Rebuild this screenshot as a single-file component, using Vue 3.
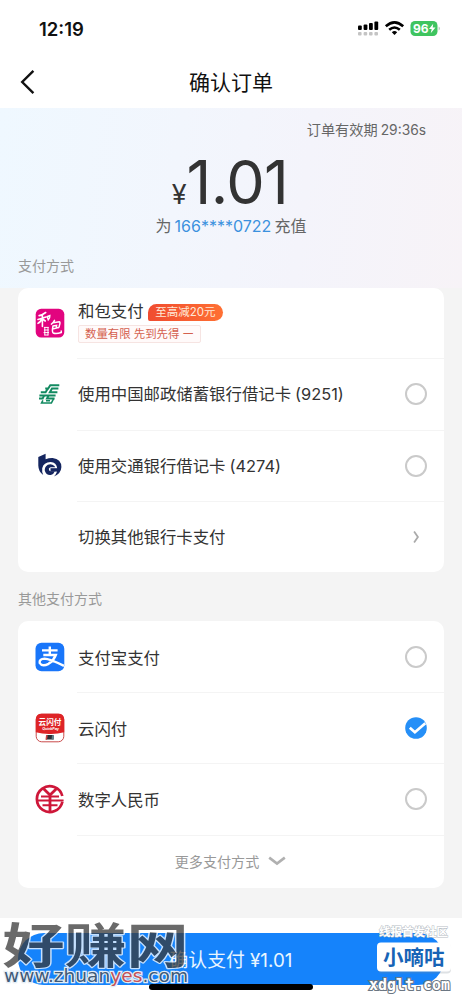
<script setup>
const cards = [
  { id: 'baofu', name: '和包支付', tag: '至高减20元', note: '数量有限 先到先得 ㇐', control: '' },
  { id: 'psbc', name: '使用中国邮政储蓄银行借记卡', num: '(9251)', control: 'radio' },
  { id: 'bocom', name: '使用交通银行借记卡', num: '(4274)', control: 'radio' },
  { id: 'switch', name: '切换其他银行卡支付', control: 'arrow' },
]
const others = [
  { id: 'alipay', name: '支付宝支付' },
  { id: 'union', name: '云闪付', checked: true },
  { id: 'ecny', name: '数字人民币' },
]
</script>

<template>
  <div class="page">
    <header class="status">
      <span class="time">12:19</span>
      <svg class="sys" width="84" height="18" viewBox="0 0 84 18">
        <g fill="#000">
          <rect x="1" y="5.5" width="3.8" height="4.5" rx="1" />
          <rect x="6.6" y="4.5" width="3.8" height="5.5" rx="1" />
          <rect x="12" y="3" width="3.8" height="7" rx="1" />
          <rect x="17.4" y="1.5" width="3.8" height="8.5" rx="1" />
        </g>
        <g fill="#c4c4c4">
          <rect x="1" y="12" width="3.6" height="3.4" rx="1" />
          <rect x="6.6" y="12" width="3.6" height="3.4" rx="1" />
          <rect x="12" y="12" width="3.6" height="3.4" rx="1" />
          <rect x="17.4" y="12" width="3.6" height="3.4" rx="1" />
        </g>
        <g fill="none" stroke="#000" stroke-width="2.6">
          <path d="M28.8 6.2 Q37.5 -1.6 46.2 6.2" />
          <path d="M32.2 9.8 Q37.5 5.2 42.8 9.8" />
        </g>
        <path d="M37.5 15 L34.8 12.2 Q37.5 10 40.2 12.2Z" fill="#000" />
        <rect x="53.5" y="1" width="27" height="15" rx="4.5" fill="#3fc45f" />
        <path d="M81.6 6.5 v4 q1.3-.4 1.3-2t-1.3-2" fill="#b6c8ba" />
        <text x="56" y="12.7" class="bat">96</text>
        <path d="M76.2 3.8 L72 9 h2.7 l-1 4.3 4.8-5.8 h-2.8z" fill="#fff" />
      </svg>
    </header>
    <nav class="nav">
      <svg class="back" width="16" height="26" viewBox="0 0 16 26">
        <path d="M13.4 1.8 L2.2 13 L13.4 24.2" fill="none" stroke="#111" stroke-width="2.4" />
      </svg>
      <h1>确认订单</h1>
    </nav>

    <section class="hero">
      <p class="valid">订单有效期<span class="clock">29:36s</span></p>
      <p class="amount"><span class="yen">¥</span><span class="price">1.01</span></p>
      <p class="target">为<b>166****0722</b>充值</p>
      <h2>支付方式</h2>
    </section>

    <ul class="card first">
      <li v-for="c in cards" :key="c.id" class="row" :class="c.id">
        <span class="icon">
          <svg v-if="c.id === 'baofu'" width="30" height="30" viewBox="0 0 30 30">
            <rect x=".7" y=".8" width="28.6" height="28.7" rx="5.5" fill="#e2047f" />
            <g fill="none" stroke="#fff" stroke-linecap="round">
              <path d="M10.7 4.5 Q7 7.3 4.1 7.6 M3 11.5 L11 9 M7.4 6.5 V18.5 M7 11 Q5 14.5 3 15.3 M8.2 11.5 L10.3 13" stroke-width="1.6" />
              <path d="M12 8.7 L14.8 7.5 Q15 10 13.3 11.8 L12.5 9.5" stroke-width="1.5" />
              <path d="M19.5 12.3 Q18 15.2 16.4 16.2 M18.3 14.8 L24.3 13.8 Q25.6 14 24.4 17.6 Q24 20.3 22 19.7 M18 18 L21.6 17.4 L21.2 20.2 L18.4 20.8 M18 18 Q16.8 23.7 18.2 25 Q21 26.2 26.3 24.5 L26.2 23" stroke-width="1.5" />
              <path d="M9.3 19.4 h4 M9.3 22 h4 M9 24.6 h4.6 M9.8 19.4 V27 M13 19.4 V27 M9.8 27 h3.2" stroke-width="1" />
            </g>
          </svg>
          <svg v-else-if="c.id === 'psbc'" width="30" height="30" viewBox="0 0 30 30">
            <g fill="none" stroke="#138a61">
              <path d="M24.3 6.2 H15.3 L13.2 9.6 H10.2" stroke-width="2" />
              <path d="M23.4 9.6 H17 L14.9 13.2 H22.4" stroke-width="2" />
              <path d="M12.8 9.6 L10.6 13.2 H5.8 M20.6 16.4 H4.4" stroke-width="2" />
              <path d="M9.2 16.4 L7.7 19.4 H4 M19.6 19.6 H12 L13.6 16.4" stroke-width="2" />
              <path d="M18.6 19.6 L16.4 24 H6.6 L7.9 21.4 M11 21.8 H15" stroke-width="1.6" />
            </g>
          </svg>
          <svg v-else-if="c.id === 'bocom'" width="30" height="30" viewBox="0 0 30 30">
            <g fill="#14255f">
              <path d="M3.3 6 L10.6 2.8 V8.2 Q14 6.9 17.6 7 Q26.3 8.2 26.4 16 Q26.2 22.5 18.8 25.6 Q22.6 22 22.2 17.2 Q21.5 11.4 15.6 10.9 Q8.6 11 7.2 17.2 Q6.7 20.6 8.2 24 Q3.4 20.6 3.3 14.5Z" />
              <path d="M19.4 15 Q16.4 12.2 12.8 13.8 Q9.4 15.9 9.8 19.8 Q11.2 24.5 15.8 24 Q18.8 23.2 19.8 20.2 H15.6 Q13.6 20 13.8 17.8 Q14.4 16.2 16 16.3 H20.2Z" />
              <path d="M15.5 17.2 H24 V20.6 H15.5Z" />
            </g>
          </svg>
        </span>
        <div class="body">
          <div class="title">
            <span class="name">{{ c.name }}</span><span v-if="c.num" class="num">{{ c.num }}</span>
            <span v-if="c.tag" class="tag">{{ c.tag }}</span>
          </div>
          <span v-if="c.note" class="note">{{ c.note }}</span>
        </div>
        <i v-if="c.control === 'radio'" class="radio"></i>
        <svg v-else-if="c.control === 'arrow'" class="arrow" width="22" height="22" viewBox="0 0 22 22">
          <path d="M9.1 5.6 L12.9 11 L9.1 16.4" fill="none" stroke="#aaa" stroke-width="1.8" />
        </svg>
      </li>
    </ul>

    <h2 class="other-title">其他支付方式</h2>

    <ul class="card">
      <li v-for="o in others" :key="o.id" class="row">
        <span class="icon">
          <svg v-if="o.id === 'alipay'" width="30" height="30" viewBox="0 0 30 30">
            <rect x=".5" y=".7" width="28.8" height="28.6" rx="6" fill="#1976fa" />
            <path d="M7 8.4 H22.6 M14.8 4.6 V12.6 M8.3 13 H20.8 Q18.6 18.6 13.6 21.8 Q7 25 4.7 21 Q4 16.8 9.6 16.6 Q14 16.6 29 23.8" fill="none" stroke="#fff" stroke-width="2.4" />
          </svg>
          <svg v-else-if="o.id === 'union'" width="30" height="30" viewBox="0 0 30 30">
            <rect x="1.2" y="1.2" width="27.6" height="27.6" rx="5.5" fill="#fff" stroke="#c94a4a" stroke-width="1" />
            <path d="M6.5 .8 H23.5 Q29.2 .8 29.2 6.5 V19.2 Q22 21.2 15 21 Q8 21.2 .8 19.2 V6.5 Q.8 .8 6.5 .8Z" fill="#de2427" />
            <text x="3.6" y="11.8" class="union-cn">云闪付</text>
            <text x="7.2" y="17" class="union-en">QuickPay</text>
            <path d="M11.5 22 H18.5 V26.5 H11Z" fill="#292f36" />
            <path d="M11 22.3 H12.8 L12 26.8 H10.5Z" fill="#c84240" />
            <path d="M17 22.3 H19 V26.6 H16.5Z" fill="#617f88" />
          </svg>
          <svg v-else width="30" height="30" viewBox="0 0 30 30">
            <g fill="none" stroke="#ce1739" stroke-width="2.7">
              <path d="M27.3 12 A12.9 12.9 0 1 0 27.4 17.8" />
              <path d="M8.6 4.8 L15 11 L21.4 4.8 M15 10.5 V27" stroke-width="2.8" />
              <path d="M6 12.4 H24 M2 16.6 H28.6 M7.5 21.2 H22.5" stroke-width="2" />
            </g>
          </svg>
        </span>
        <span class="name">{{ o.name }}</span>
        <svg v-if="o.checked" class="checked" width="22" height="22" viewBox="0 0 22 22">
          <circle cx="11" cy="11" r="10.8" fill="#258ff7" />
          <path d="M4.8 10.7 L9.9 15.3 L20.3 6.2" fill="none" stroke="#fff" stroke-width="2.7" />
        </svg>
        <i v-else class="radio"></i>
      </li>
      <li class="more">
        <span>更多支付方式</span>
        <svg width="18" height="12" viewBox="0 0 18 12">
          <path d="M1.2 2.6 L9 8.6 L16.8 2.6" fill="none" stroke="#b0b0b0" stroke-width="2.6" />
        </svg>
      </li>
    </ul>

    <footer class="footer">
      <button class="pay">确认支付 ¥1.01</button>
      <i class="home"></i>
      <svg class="mark" width="462" height="82" viewBox="0 0 462 82">
        <text transform="translate(2.5 44.5) scale(1.24 .95)" x="0" y="0" class="big">好赚网</text>
        <text x="4" y="63.5" class="site" textLength="184" lengthAdjust="spacingAndGlyphs">www.zhuan<tspan fill="#c45058">yes</tspan>.com</text>
        <text x="379" y="17.5" class="slogan">线报首发社区</text>
        <rect x="378" y="25.5" width="73" height="30" rx="4" fill="#7d8793" opacity=".25" />
        <rect x="377" y="24.5" width="74" height="29" rx="4" fill="#fff" />
        <text x="383" y="46.5" class="brand">小嘀咕</text>
        <text x="369" y="71.5" class="domain" textLength="81" lengthAdjust="spacingAndGlyphs">xdglt.com</text>
      </svg>
    </footer>
  </div>
</template>

<style>
body { margin: 0; background: #f4f4f4; }
</style>

<style scoped>
* { box-sizing: border-box; }
.page {
  width: 462px;
  height: 1000px;
  overflow: hidden;
  display: flex;
  flex-direction: column;
  background: #f4f4f4;
  color: #333;
  font-family: Inter, "Noto Sans CJK SC", sans-serif;
}
h1, h2, p, ul { margin: 0; padding: 0; }
ul { list-style: none; }
.status {
  flex: none;
  height: 58px;
  padding: 0 21px 0 39px;
  display: flex;
  justify-content: space-between;
  align-items: center;
  background: #fff;
}
.time { font-size: 18.5px; font-weight: 600; color: #111; }
.bat { font: 700 12px Inter, sans-serif; fill: #fff; }
.nav {
  flex: none;
  height: 50px;
  display: flex;
  align-items: center;
  justify-content: center;
  background: #fff;
  position: relative;
}
.back { position: absolute; left: 20px; top: 11px; }
h1 { font-size: 21px; line-height: 30px; font-weight: 400; color: #111; }
.hero {
  flex: none;
  height: 180px;
  background: linear-gradient(97deg, #eff8ff 0%, #f2f6fd 38%, #f4f4fb 65%, #f7f3f7 100%);
}
.valid {
  height: 44px;
  line-height: 44px;
  padding-right: 36px;
  text-align: right;
  font-size: 14.2px;
  color: #666;
}
.clock { margin-left: 3px; font-size: 13.8px; }
.amount {
  height: 60px;
  display: flex;
  justify-content: center;
  align-items: baseline;
  line-height: 60px;
  padding-right: 2px;
}
.yen { font-size: 27px; }
.price { font-size: 61px; letter-spacing: -.6px; }
.target {
  height: 28px;
  line-height: 28px;
  text-align: center;
  font-size: 16px;
  color: #666;
}
.target b { font-weight: 400; color: #3b91de; margin: 0 3px; }
h2 { font-size: 14px; font-weight: 400; line-height: 20px; color: #999; padding-left: 18px; }
.hero h2 { margin-top: 16px; }
.card {
  flex: none;
  margin: 0 18px;
  background: #fff;
  border-radius: 10px;
}
.row {
  height: 71.2px;
  padding: 0 17px;
  display: flex;
  align-items: center;
  position: relative;
}
.row.baofu { height: 70.4px; }
.first .row:not(.baofu) { padding-top: 1px; }
.row + .row::before, .more::before {
  content: "";
  position: absolute;
  top: 0;
  left: 59px;
  right: 0;
  height: 1px;
  background: #f4f4f4;
}
.icon { width: 30px; height: 30px; margin-right: 13px; flex: none; }
.icon svg { display: block; }
.union-cn { font: 700 7.6px "Noto Sans CJK SC", sans-serif; fill: #fff; }
.union-en { font: italic 700 3.6px Inter, sans-serif; fill: #fff; }
.body { flex: 1; }
.name { font-size: 16.4px; flex: 1; }
.num { font-size: 16.4px; margin-left: 4px; }
.title { display: flex; align-items: center; white-space: nowrap; line-height: 24px; }
.title .name { flex: none; }
.tag {
  margin: 2px 0 0 4px;
  width: 75.5px;
  height: 17px;
  line-height: 17px;
  text-align: center;
  font-size: 11.5px;
  color: #ffe9d8;
  background: linear-gradient(90deg, #f04c30, #ff7033);
  border-radius: 9px 9px 9px 2px;
}
.baofu .title { position: relative; top: -1px; }
.baofu .body { display: flex; flex-direction: column; align-items: flex-start; margin-top: -3px; }
.note {
  margin-top: 1px;
  width: 123px;
  height: 18px;
  line-height: 16px;
  padding-left: 6px;
  font-size: 11.4px;
  color: #d4604e;
  white-space: nowrap;
  background: #fffafa;
  border: 1px solid #f6e4e2;
  border-radius: 2px;
}
.radio {
  width: 22px;
  height: 22px;
  border: 2px solid #cacaca;
  border-radius: 50%;
}
.other-title { margin: 17px 0 12px; }
.more {
  height: 53.4px;
  display: flex;
  align-items: center;
  justify-content: center;
  gap: 9px;
  padding-right: 1px;
  font-size: 14.1px;
  color: #999;
  position: relative;
}
.footer {
  margin-top: auto;
  flex: none;
  height: 82px;
  padding: 15px 18px 0;
  background: #fff;
  position: relative;
}
.pay {
  display: block;
  width: 426px;
  height: 52px;
  padding: 0 0 1px;
  border: 0;
  border-radius: 26px;
  background: #1583fb;
  color: #e9f5ff;
  font: 400 18.8px Inter, "Noto Sans CJK SC", sans-serif;
}
.home {
  position: absolute;
  left: 149px;
  top: 66px;
  width: 164px;
  height: 6px;
  border-radius: 3px;
  background: #000;
}
.mark { position: absolute; left: 0; top: 0; }
.mark text { font-family: "Noto Sans CJK SC", sans-serif; font-weight: 700; }
.mark .big {
  font-size: 50px;
  fill: #393939;
  stroke: #fff;
  stroke-width: 2.4px;
  stroke-linejoin: round;
  paint-order: stroke;
  opacity: .75;
}
.mark .site {
  font-family: "DejaVu Sans", sans-serif;
  font-weight: 400;
  font-size: 17px;
  fill: #405a78;
  stroke: #e4edf5;
  stroke-width: 2.4px;
  paint-order: stroke;
}
.mark .slogan { font-size: 11.5px; fill: #fff; stroke: #b7bdc4; stroke-width: 1px; paint-order: stroke; }
.mark .brand { font-size: 20.5px; fill: #1764b6; }
.mark .domain {
  font-family: "DejaVu Sans Mono", monospace;
  font-size: 15.5px;
  fill: #fff;
  stroke: #6c7783;
  stroke-width: 2.2px;
  paint-order: stroke;
}
</style>
